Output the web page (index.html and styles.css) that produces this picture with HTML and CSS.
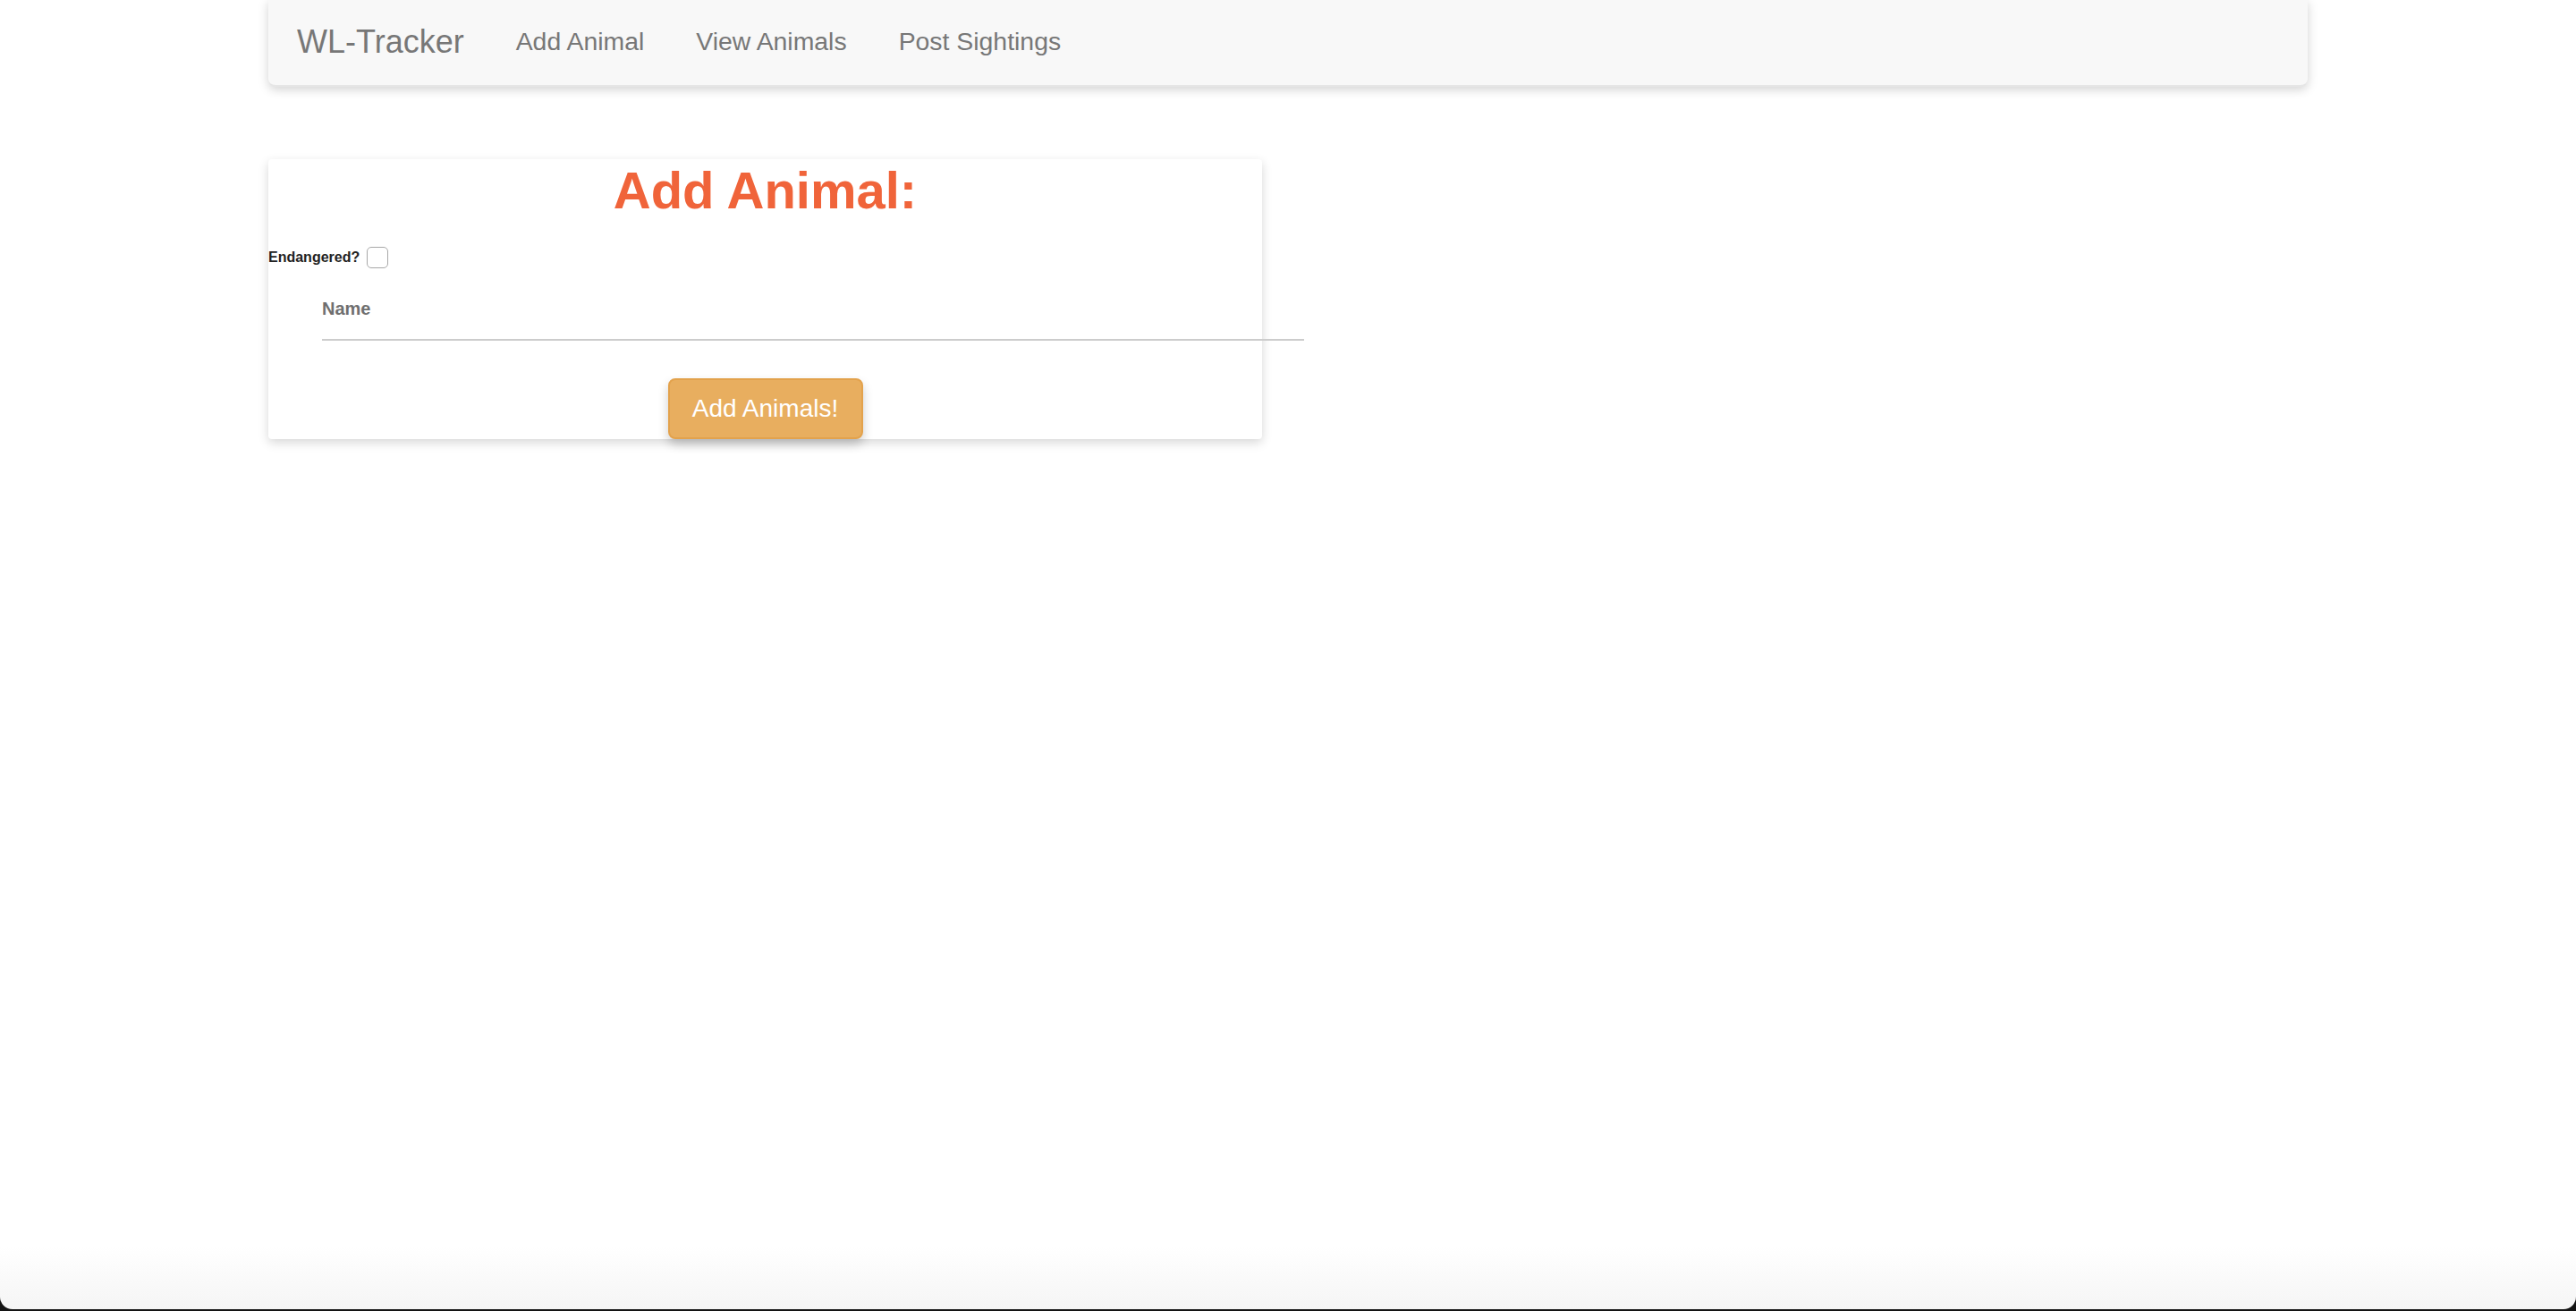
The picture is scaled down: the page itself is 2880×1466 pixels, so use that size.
FILE: index.html
```html
<!DOCTYPE html>
<html lang="en">
<head>
<meta charset="utf-8">
<title>WL-Tracker</title>
<link rel="stylesheet" href="styles.css">
</head>
<body>
<div class="page">
  <div class="container">
    <nav class="navbar">
      <a class="brand" href="#">WL-Tracker</a>
      <a class="nav-link" href="#">Add Animal</a>
      <a class="nav-link" href="#">View Animals</a>
      <a class="nav-link" href="#">Post Sightings</a>
    </nav>
    <div class="card">
      <h1 class="card-title">Add Animal:</h1>
      <div class="check-row">
        <label class="check-label" for="endangered">Endangered?</label>
        <span class="checkbox" id="endangered"></span>
      </div>
      <div class="field">
        <label class="field-label">Name</label>
        <div class="field-line"></div>
      </div>
      <div class="actions">
        <button class="btn" type="button">Add Animals!</button>
      </div>
    </div>
  </div>
</div>
</body>
</html>
```
FILE: styles.css
```css
html {
  background: #141414;
  height: 100%;
}
body {
  margin: 0;
  height: 100%;
  font-family: "Liberation Sans", Arial, sans-serif;
}
.page {
  height: calc(100% - 2px);
  background: linear-gradient(to bottom, #ffffff 0, #ffffff calc(100% - 70px), #f5f5f5 100%);
  border-radius: 0 0 14px 14px;
  overflow: hidden;
}
.container {
  width: 2280px;
  margin: 0 auto;
}
.navbar {
  height: 97px;
  display: flex;
  align-items: center;
  gap: 58px;
  padding-left: 32px;
  padding-bottom: 2px;
  background: #f8f8f8;
  border-bottom: 2px solid #e6e6e6;
  border-radius: 0 0 8px 8px;
  box-shadow: 0 3px 12px rgba(0, 0, 0, 0.18);
  box-sizing: border-box;
}
.navbar a {
  color: #777777;
  text-decoration: none;
}
.brand {
  font-size: 36px;
}
.nav-link {
  font-size: 28.4px;
}
.card {
  margin-top: 81px;
  width: 1111px;
  background: #ffffff;
  border-radius: 4px;
  box-shadow: 0 4px 12px rgba(0, 0, 0, 0.16);
}
.card-title {
  margin: 0;
  padding-top: 2px;
  text-align: center;
  font-size: 58px;
  line-height: 66px;
  font-weight: bold;
  color: #f0643a;
}
.check-row {
  margin-top: 30px;
  display: flex;
  align-items: center;
  gap: 8px;
}
.check-label {
  font-size: 16px;
  font-weight: bold;
  color: #222222;
}
.checkbox {
  width: 22px;
  height: 22px;
  border: 1px solid #a8a8a8;
  border-radius: 5px;
  background: #ffffff;
}
.field {
  margin-left: 60px;
  width: 1098px;
  padding-top: 34px;
}
.field-label {
  display: block;
  font-size: 20px;
  font-weight: bold;
  color: #6f6f6f;
}
.field-line {
  margin-top: 22px;
  height: 2px;
  background: #cccccc;
}
.actions {
  display: flex;
  justify-content: center;
  padding-top: 42px;
}
.btn {
  width: 218px;
  height: 68px;
  font-family: "Liberation Sans", Arial, sans-serif;
  font-size: 28px;
  color: #ffffff;
  background: #e8ae5f;
  border: 2px solid #e3a24c;
  border-radius: 8px;
  box-shadow: 0 6px 12px rgba(0, 0, 0, 0.2);
}
```
